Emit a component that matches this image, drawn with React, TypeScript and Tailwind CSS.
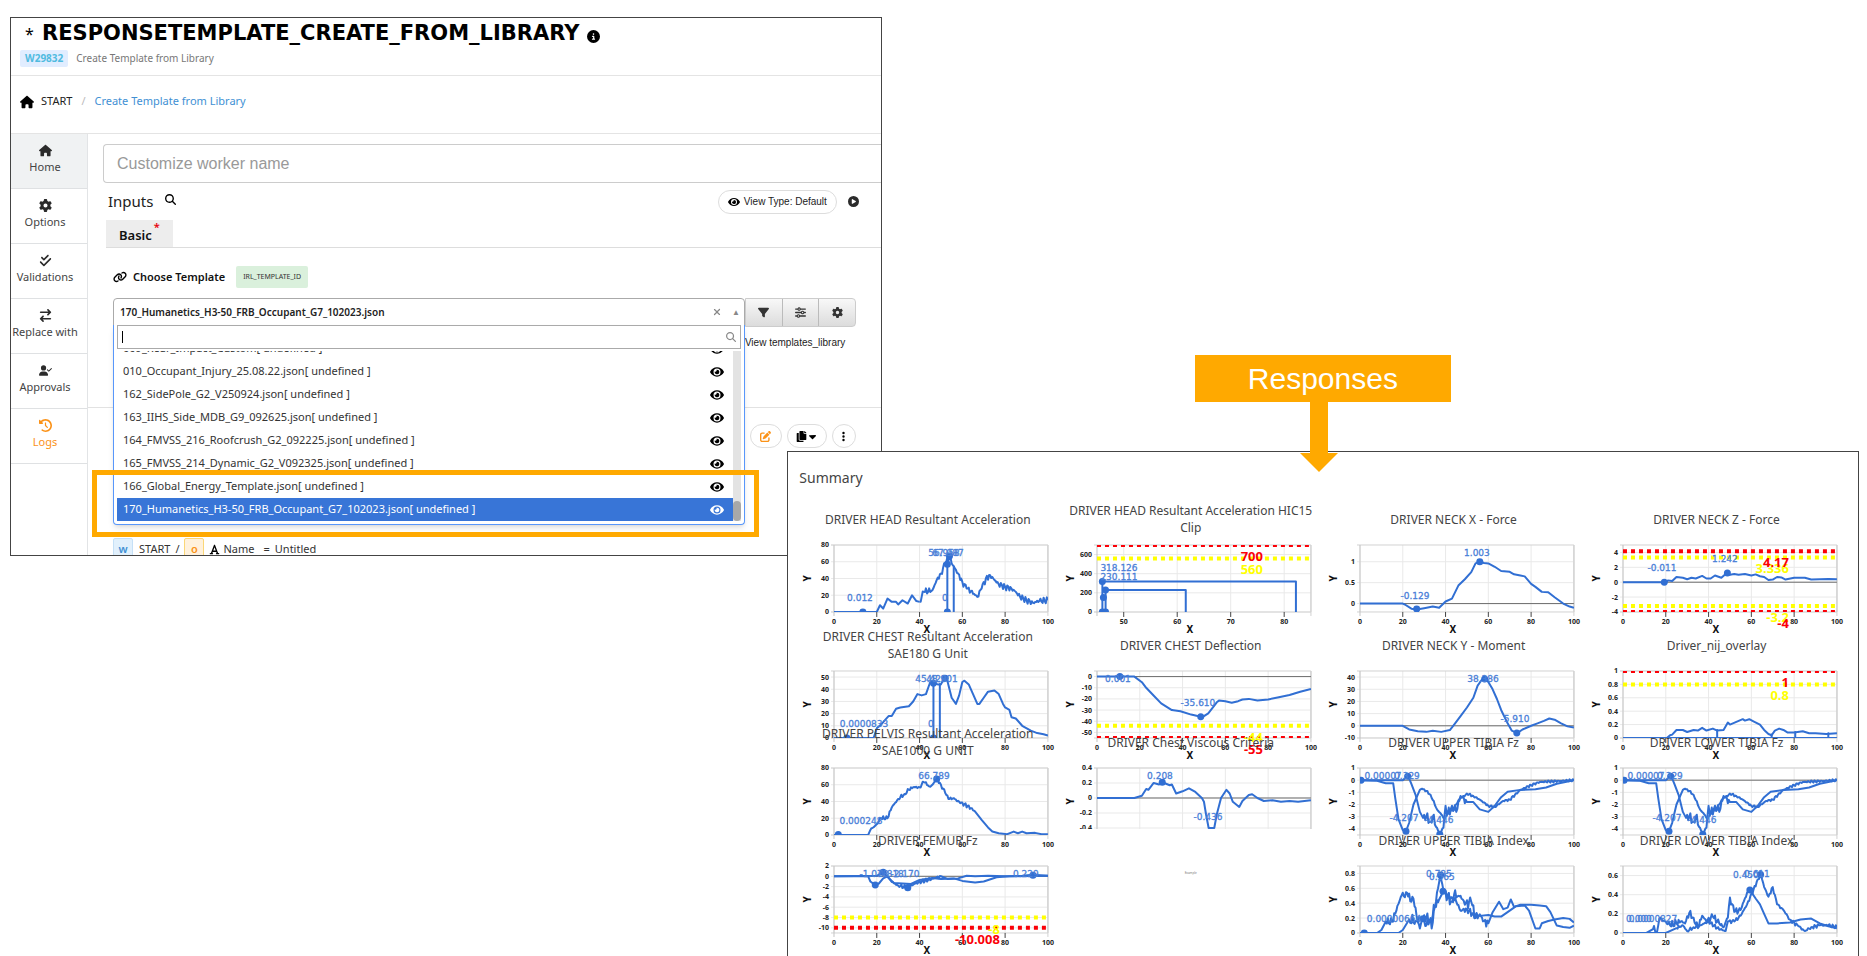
import React, { useState } from 'react';
import {
    FaArrowRightArrowLeft,
    FaCaretDown,
    FaCheckDouble,
    FaCircleInfo,
    FaCirclePlay,
    FaClockRotateLeft,
    FaEllipsisVertical,
    FaFilter,
    FaFont,
    FaGear,
    FaHouse,
    FaLink,
    FaMagnifyingGlass,
    FaPenToSquare,
    FaSliders,
    FaUserCheck,
    FaXmark,
} from 'react-icons/fa6';
import { FaCopy, FaEye } from 'react-icons/fa';

type Point = [number, number];

interface Series {
    points: Point[];
    noise?: { from: number; to: number; amp: number };
}

interface Chart {
    title: string;
    x?: [number, number];
    y: [number, number];
    xTicks?: number[];
    yTicks: number[];
    series: Series[];
    markers?: Point[];
    limits?: { value: number; color: string }[];
    // label positions are measured from the top left of the plot
    labels?: { text: string; x: number; y: number }[];
    cropped?: boolean;
}

const RED = '#fb0007';
const YELLOW = '#ffff00';
const BLUE = '#316fd3';

const tibiaForce = {
    y: [-4.5, 1] as [number, number],
    yTicks: [1, 0, -1, -2, -3, -4],
    series: [
        {
            points: [[0, 0], [8, -0.05], [12, -0.25], [15.5, -0.25], [16.5, -1.5], [18, -3.2], [20, -4.1], [21.5, -4.2], [23, -3.5], [25, -2], [28, -0.8], [29, -0.7], [31, -0.9], [33, -1.2], [36, -2.4], [38, -2.8], [39.5, -3.2], [41, -2.7], [43, -2.4], [45, -2], [47, -1.4], [49, -1.3], [50, -1.1], [53, -1.3], [56, -1.6], [60, -2.1], [63, -2.2], [67, -1.7], [70, -1.6], [75, -0.8], [80, -0.4], [84, -0.15], [90, -0.1], [100, 0]] as Point[],
            noise: { from: 28, to: 100, amp: 0.1 },
        },
        {
            points: [[0, 0], [20, 0], [22.5, 0.35], [24, -0.3], [26, -1.2], [28, -2.6], [29.5, -3.1], [31, -3], [33, -3.4], [34, -3], [36, -3.9], [37.5, -4.4], [39, -3.9], [40, -2.1], [41, -2.8], [43, -2.1], [45, -2.6], [47, -1.3], [50, -1.8], [53, -1.8], [56, -2.4], [60, -2.6], [63, -2.1], [66, -1.4], [69, -0.95], [75, -0.8], [82, -0.75], [87, -0.6], [92, -0.3], [100, 0]] as Point[],
            noise: { from: 29, to: 48, amp: 0.45 },
        },
    ],
    markers: [[0.5, 0], [22.3, 0.33], [21.5, -4.2], [37.3, -4.45]] as Point[],
    labels: [
        { text: '0.00007', x: 23, y: 8 },
        { text: '0.329', x: 47, y: 8 },
        { text: '-4.207', x: 44, y: 50 },
        { text: '-4.446', x: 79, y: 52 },
    ],
};

const charts: (Chart | null)[] = [
    {
        title: 'DRIVER HEAD Resultant Acceleration',
        y: [0, 80],
        yTicks: [0, 20, 40, 60, 80],
        series: [
            {
                points: [[0, 0], [20, 0], [21.5, 8], [23, 4], [25, 16], [27, 12], [29, 12], [30, 9], [32, 14], [34.5, 10], [36.5, 20], [38.5, 13], [40, 12]],
            },
            {
                points: [[40, 12], [42, 24], [46, 26], [48, 38], [50, 46], [52, 58], [54, 66], [55.5, 56], [58, 46], [60, 36], [62, 28], [64, 25], [67, 18], [69, 28], [71, 40], [73, 44], [74.5, 40], [77, 33], [80, 30], [83, 28], [85, 24], [87, 18], [90, 14], [93, 11], [96, 13], [100, 14]],
                noise: { from: 40, to: 100, amp: 4 },
            },
            { points: [[53, 0], [53, 57]] },
            { points: [[56, 0], [56, 55]] },
        ],
        markers: [[13.5, 0], [53, 0], [53, 57], [54, 67]],
        labels: [
            { text: '56.958', x: 110, y: 8 },
            { text: '67.987', x: 114, y: 8 },
            { text: '0.012', x: 26, y: 53 },
            { text: '0', x: 111, y: 53 },
        ],
    },
    {
        title: 'DRIVER HEAD Resultant Acceleration HIC15 Clip',
        x: [45, 85],
        y: [0, 700],
        xTicks: [50, 60, 70, 80],
        yTicks: [0, 200, 400, 600],
        series: [
            { points: [[46, 0], [46, 318], [82.2, 318], [82.2, 0]] },
            { points: [[46.6, 0], [46.6, 230], [61.6, 230], [61.6, 0]] },
        ],
        markers: [[46, 318], [46.6, 230], [46.2, 150], [46, 0], [46.6, 0]],
        limits: [{ value: 560, color: YELLOW }, { value: 700, color: RED }],
        labels: [
            { text: '318.126', x: 22, y: 23 },
            { text: '230.111', x: 22, y: 32 },
        ],
    },
    {
        title: 'DRIVER NECK X - Force',
        y: [-0.2, 1.4],
        yTicks: [0, 0.5, 1],
        series: [
            { points: [[0, 0], [20, 0], [21, -0.02], [24, -0.12], [26.5, -0.14], [30, -0.11], [34, -0.07], [37, -0.1], [40, 0.05], [43, 0.12], [46, 0.43], [49, 0.58], [52, 0.75], [54, 0.96], [56, 1], [58, 0.97], [60, 0.96], [63, 0.88], [66, 0.78], [70, 0.76], [72, 0.7], [75, 0.67], [77, 0.65], [80, 0.47], [82, 0.4], [85, 0.28], [88, 0.27], [91, 0.15], [95, 0], [98, -0.07], [100, -0.1]] },
        ],
        markers: [[26.5, -0.13], [56, 1]],
        labels: [
            { text: '1.003', x: 117, y: 8 },
            { text: '-0.129', x: 55, y: 51 },
        ],
    },
    {
        title: 'DRIVER NECK Z - Force',
        y: [-4, 5],
        yTicks: [-4, -2, 0, 2, 4],
        series: [
            { points: [[0, 0], [20, 0], [21, 0.25], [23, 0.15], [25, 0.7], [28, 0.6], [30, 0.4], [32, 0.6], [34, 0.5], [37, 0.85], [39, 0.5], [41, 0.5], [43, 0.9], [46, 0.6], [48, 1.1], [49, 1.25], [50, 1], [52, 1.1], [54, 1], [57, 1.1], [60, 0.9], [62, 1.05], [64, 0.8], [66, 0.7], [68, 0.3], [70, 0.35], [72, 0.7], [74, 0.65], [76, 0.35], [80, 0.6], [85, 0.6], [88, 0.35], [92, 0.4], [96, 0.45], [100, 0.4]] },
        ],
        markers: [[19.3, 0], [48.8, 1.25]],
        limits: [
            { value: 3.336, color: YELLOW },
            { value: -3.2, color: YELLOW },
            { value: 4.17, color: RED },
            { value: -4, color: RED },
        ],
        labels: [
            { text: '-0.011', x: 39, y: 23 },
            { text: '1.242', x: 102, y: 14 },
        ],
    },
    {
        title: 'DRIVER CHEST Resultant Acceleration SAE180 G Unit',
        y: [0, 55],
        yTicks: [0, 10, 20, 30, 40, 50],
        series: [
            { points: [[0, 0], [18.5, 0], [20, 8], [22, 11], [24, 15], [25.5, 18], [27, 18], [29, 24], [31, 25], [35, 26], [37, 30], [39, 36], [41, 35], [43, 36], [45, 46], [47, 45], [48.5, 44], [50, 44], [51.5, 49], [53, 47], [55, 33], [57, 28], [58.5, 35], [60, 46], [61, 47], [63, 44], [65, 36], [67, 28], [68, 28], [70, 33], [72, 38], [75, 39], [77, 36], [79, 28], [80, 25], [82, 23], [83, 17], [85, 16], [88, 10], [92, 6], [95, 4], [98, 3], [100, 2]] },
            { points: [[46.5, 0], [46.5, 45]] },
            { points: [[49.5, 0], [49.5, 45]] },
        ],
        markers: [[6, 0], [46.5, 0], [46.5, 45], [52, 49]],
        labels: [
            { text: '45.428', x: 97, y: 8 },
            { text: '48.901', x: 108, y: 8 },
            { text: '0.0000833', x: 30, y: 53 },
            { text: '0', x: 97, y: 53 },
        ],
    },
    {
        title: 'DRIVER CHEST Deflection',
        y: [-55, 5],
        yTicks: [0, -10, -20, -30, -40, -50],
        series: [
            { points: [[0, 0], [17.5, 0], [21, -5], [23, -10], [27, -18], [30, -24], [35, -30], [39, -31], [44, -34], [48.5, -36], [50, -35.5], [52, -33], [54, -28], [56, -23], [57, -21.5], [60, -22], [63, -23.5], [66, -22], [68, -20.5], [71, -20], [75, -21.5], [80, -20.5], [85, -18.5], [90, -16.5], [95, -13.5], [100, -11]] },
        ],
        markers: [[10.7, 0], [48.5, -36]],
        limits: [{ value: -44, color: YELLOW }, { value: -55, color: RED }],
        labels: [
            { text: '0.001', x: 21, y: 8 },
            { text: '-35.610', x: 101, y: 32 },
        ],
    },
    {
        title: 'DRIVER NECK Y - Moment',
        y: [-10, 45],
        yTicks: [-10, 0, 10, 20, 30, 40],
        series: [
            { points: [[0, 0], [20, 0], [23, -3], [27, -4.5], [31, -5], [34, -4], [38, -5], [42, -3.5], [44, 1], [47, 8], [50, 15], [53, 23], [55, 33], [57, 38], [58.5, 38.5], [60, 36], [62, 30], [64, 22], [66, 13], [69, 2], [71, -4], [73.5, -6], [76, -3], [80, 0], [83, 2], [86, 4], [88.5, 6], [91, 5], [94, 2], [97, -0.5], [100, -1.5]] },
        ],
        markers: [[58.3, 38.4], [73.3, -6]],
        labels: [
            { text: '38.386', x: 123, y: 8 },
            { text: '-5.910', x: 155, y: 48 },
        ],
    },
    {
        title: 'Driver_nij_overlay',
        y: [0, 1],
        yTicks: [0, 0.2, 0.4, 0.6, 0.8, 1],
        series: [
            { points: [[0, 0], [20.5, 0], [22, 0.04], [23, 0.05], [25, 0.12], [28, 0.12], [30, 0.09], [33, 0.12], [35, 0.11], [37, 0.15], [39, 0.11], [42, 0.14], [44, 0.11], [47, 0.12], [49, 0.23], [50, 0.2], [53, 0.24], [56, 0.28], [57, 0.26], [59, 0.28], [61, 0.25], [64, 0.2], [66, 0.12], [68, 0.06], [69.5, 0.04], [71, 0.11], [73, 0.14], [75, 0.12], [77, 0.08], [80, 0.08], [84, 0.1], [87, 0.07], [90, 0.07], [95, 0.06], [100, 0.07]] },
            { points: [[0, 0], [44, 0], [44, 0.12], [44, 0], [69.5, 0], [69.5, 0.05], [69.5, 0], [80.5, 0], [80.5, 0.09], [80.5, 0], [96, 0], [96, 0.07], [96, 0], [100, 0]] },
        ],
        limits: [{ value: 0.8, color: YELLOW }, { value: 1, color: RED }],
    },
    {
        title: 'DRIVER PELVIS Resultant Acceleration SAE1000 G UNIT',
        y: [0, 80],
        yTicks: [0, 20, 40, 60, 80],
        series: [
            {
                points: [[0, 0], [16, 0], [17, 6], [20, 13], [22, 20], [25, 20], [27, 33], [30, 43], [33, 49], [35, 54], [37, 57], [40, 57], [42, 63], [43, 63], [44.5, 58], [46, 60], [48, 67], [50, 60], [52, 50], [53.5, 43], [56, 44], [59, 38], [61, 37], [64, 32], [66, 28], [69, 18], [72, 9], [74, 4], [77, 2], [81, 1], [84, 4], [86, 2], [88, 4], [90, 2], [94, 2.5], [97, 1], [100, 1]],
                noise: { from: 17, to: 66, amp: 2.5 },
            },
        ],
        markers: [[2, 0.6], [48, 67]],
        labels: [
            { text: '66.789', x: 100, y: 8 },
            { text: '0.000248', x: 27, y: 53 },
        ],
    },
    {
        title: 'DRIVER Chest Viscous Criteria',
        y: [-0.493, 0.4],
        yTicks: [-0.4, -0.2, 0, 0.2, 0.4],
        series: [
            { points: [[0, 0], [17.5, 0], [21, 0.03], [23, 0.12], [24, 0.11], [26.5, 0.2], [29, 0.18], [30.5, 0.21], [34, 0.17], [35, 0.18], [37, 0.06], [40, 0.09], [43, 0.13], [46, 0.08], [49, 0], [50, -0.05], [51, -0.22], [52.2, -0.4], [54.8, -0.4], [56, -0.22], [58, 0], [60.5, 0.11], [62, 0.06], [63.5, -0.05], [66.5, -0.12], [68, -0.04], [71, 0.04], [72.5, 0.05], [75, 0], [78, -0.04], [82, -0.03], [86, -0.05], [90, -0.04], [94, -0.05], [100, -0.03]] },
        ],
        markers: [[30.5, 0.21]],
        labels: [
            { text: '0.208', x: 63, y: 8 },
            { text: '-0.436', x: 111, y: 49 },
        ],
        cropped: true,
    },
    { title: 'DRIVER UPPER TIBIA Fz', ...tibiaForce },
    { title: 'DRIVER LOWER TIBIA Fz', ...tibiaForce },
    {
        title: 'DRIVER FEMUR Fz',
        y: [-11, 2],
        yTicks: [2, 0, -2, -4, -6, -8, -10],
        series: [
            {
                points: [[0, 0], [16, 0], [17, -1], [19.3, -1.7], [21, -1.4], [23, -0.4], [25, 0], [27, -1.1], [30, -1.8], [34, -2.2], [38, -1.4], [41, -1], [44, -0.7], [50, 0], [53, -0.5], [58, -0.4], [62, 0.1], [66, 0], [72, 0.1], [80, 0], [100, 0.1]],
                noise: { from: 27, to: 47, amp: 0.4 },
            },
            { points: [[0, 0], [20, 0.1], [23, 0.8], [25, -0.1], [28, -1.3], [32, -1.4], [36, -1.5], [40, -0.7], [46, -0.3], [50, -0.5], [56, -0.4], [60, -0.9], [66, -1.2], [70, -1], [76, -0.2], [82, 0], [88, 0.1], [93, 0.3], [100, 0.1]] },
        ],
        markers: [[19.3, -1.7], [23, 0.8], [34.5, -2.2], [93, 0.2]],
        limits: [{ value: -8, color: YELLOW }, { value: -10.008, color: RED }],
        labels: [
            { text: '-1.078', x: 40, y: 8 },
            { text: '0.818', x: 57, y: 8 },
            { text: '-2.170', x: 71, y: 8 },
            { text: '0.229', x: 192, y: 8 },
        ],
    },
    null,
    {
        title: 'DRIVER UPPER TIBIA Index',
        y: [0, 0.9],
        yTicks: [0, 0.2, 0.4, 0.6, 0.8],
        series: [
            {
                points: [[0, 0], [8, 0], [10, 0.04], [12, 0.15], [15, 0.15], [17, 0.3], [19, 0.48], [20, 0.54], [21, 0.48], [22, 0.54], [24, 0.42], [25, 0.46], [27, 0.15], [28, 0.06], [29, 0.18], [31, 0.1], [33, 0.2], [33.5, 0.06], [35, 0.35], [36.5, 0.6], [37.5, 0.78], [39, 0.57], [41, 0.5], [43, 0.48], [45, 0.42], [47, 0.3], [50, 0.32], [53, 0.25], [56, 0.23], [60, 0.24], [63, 0.22], [66, 0.22], [70, 0.3], [73, 0.36], [77, 0.37], [79, 0.3], [82, 0.06], [84, 0.06], [85, 0.13], [88, 0.16], [91, 0.18], [95, 0.2], [98, 0.19], [100, 0.14]],
                noise: { from: 12, to: 56, amp: 0.05 },
            },
            {
                points: [[0, 0], [18, 0], [20, 0.04], [23, 0.18], [26, 0.16], [28, 0.2], [31, 0.2], [33, 0.18], [35, 0.35], [37, 0.45], [39, 0.55], [41, 0.48], [43, 0.42], [44, 0.52], [46, 0.5], [47, 0.5], [49, 0.38], [52, 0.42], [54, 0.2], [56, 0.25], [58, 0.16], [60, 0.13], [62, 0.28], [65, 0.42], [67, 0.32], [69, 0.34], [70.5, 0.45], [72, 0.35], [75, 0.38], [80, 0.38], [84, 0.37], [87, 0.36], [89, 0.28], [92, 0.1], [95, 0.08], [98, 0.07], [100, 0.1]],
                noise: { from: 22, to: 60, amp: 0.08 },
            },
        ],
        markers: [[2, 0], [29.5, 0.19], [37.7, 0.78], [38.8, 0.56]],
        labels: [
            { text: '0.785', x: 79, y: 8 },
            { text: '0.565', x: 82, y: 11 },
            { text: '0.00000664', x: 34, y: 53 },
        ],
    },
    {
        title: 'DRIVER LOWER TIBIA Index',
        y: [0, 0.7],
        yTicks: [0, 0.2, 0.4, 0.6],
        series: [
            {
                points: [[0, 0], [11, 0], [14, 0.04], [16, 0.02], [17, 0.15], [20, 0.12], [22, 0.08], [25, 0.1], [27, 0.12], [29, 0.1], [31, 0.21], [33, 0.16], [35, 0.05], [37, 0.18], [39, 0.12], [42, 0.17], [45, 0.1], [47, 0.06], [49, 0.16], [50, 0.37], [52, 0.22], [55, 0.24], [58, 0.42], [59.3, 0.45], [62, 0.36], [64, 0.3], [66, 0.2], [68, 0.1], [72, 0.1], [78, 0.11], [83, 0.14], [88, 0.15], [92, 0.1], [96, 0.07], [100, 0.05]],
                noise: { from: 14, to: 58, amp: 0.04 },
            },
            {
                points: [[0, 0], [20, 0], [25, 0.05], [28, 0.08], [30, 0.02], [33, 0.06], [36, 0.08], [40, 0.12], [44, 0.05], [48, 0.02], [49, 0.12], [52, 0.12], [55, 0.18], [58, 0.3], [61, 0.45], [63, 0.56], [64.5, 0.61], [66, 0.48], [68, 0.38], [70, 0.48], [72, 0.3], [75, 0.24], [78, 0.14], [82, 0.07], [85, 0.02], [88, 0.06], [92, 0.08], [96, 0.08], [100, 0.06]],
                noise: { from: 22, to: 100, amp: 0.02 },
            },
        ],
        markers: [[59.3, 0.45], [64.3, 0.61]],
        labels: [
            { text: '0.450', x: 123, y: 9 },
            { text: '0.611', x: 134, y: 8 },
            { text: '0.000', x: 16, y: 53 },
            { text: '0.0000827', x: 30, y: 53 },
        ],
    },
];

const PLOT = { left: 38, top: 9, width: 214, height: 67 };

// adds a repeatable ripple between two x values
const addNoise = (series: Series): Point[] => {
    const { points, noise } = series;
    if (!noise) return points;

    const result: Point[] = [];
    points.forEach(([x, y], index) => {
        result.push([x, y]);
        const next = points[index + 1];
        if (!next || x < noise.from || x >= noise.to) return;

        const steps = Math.max(1, Math.round((next[0] - x) / 0.5));
        for (let i = 1; i < steps; i++) {
            const t = i / steps;
            const px = x + (next[0] - x) * t;
            const ripple = Math.sin(px * 12.9) * Math.cos(px * 4.1);
            result.push([px, y + (next[1] - y) * t + ripple * noise.amp]);
        }
    });
    return result;
};

function ResponseChart({ chart }: { chart: Chart }) {
    const [xMin, xMax] = chart.x ?? [0, 100];
    const [yMin, yMax] = chart.y;
    const xTicks = chart.xTicks ?? [0, 20, 40, 60, 80, 100];
    const right = PLOT.left + PLOT.width;
    const bottom = PLOT.top + PLOT.height;

    const toX = (value: number) => ((value - xMin) / (xMax - xMin)) * PLOT.width;
    const toY = (value: number) => ((yMax - value) / (yMax - yMin)) * PLOT.height;

    return (
        <svg
            viewBox={chart.cropped ? '0 0 263 70' : '0 0 263 100'}
            className={chart.cropped ? 'w-full shrink-0 overflow-hidden' : 'w-full shrink-0 overflow-visible'}
            role="img"
            aria-label={chart.title}
        >
            {/* grid */}
            {xTicks.map(tick => (
                <line key={tick} x1={PLOT.left + toX(tick)} x2={PLOT.left + toX(tick)} y1={PLOT.top} y2={bottom} stroke="#e9e9e9" />
            ))}
            {chart.yTicks.map(tick => (
                <line key={tick} x1={PLOT.left - 3} x2={right} y1={PLOT.top + toY(tick)} y2={PLOT.top + toY(tick)} stroke="#e9e9e9" />
            ))}
            <path d={`M${PLOT.left - 3} ${PLOT.top}H${right}V${bottom}H${PLOT.left - 3}`} fill="none" stroke="#d2d2d2" />
            <line x1={PLOT.left} x2={PLOT.left} y1={PLOT.top} y2={bottom + 4} stroke="#c4c4c4" />
            <line x1={right} x2={right} y1={PLOT.top} y2={bottom + 4} stroke="#d2d2d2" />
            {yMin < 0 && (
                <line x1={PLOT.left} x2={right} y1={PLOT.top + toY(0)} y2={PLOT.top + toY(0)} stroke="#6b6b6b" />
            )}

            {/* axis labels */}
            <g className="font-['Noto_Sans'] text-[7px] font-bold" fill="#222">
                {chart.yTicks.map(tick => (
                    <text key={tick} x={PLOT.left - 5} y={PLOT.top + toY(tick)} textAnchor="end" dominantBaseline="central">
                        {tick}
                    </text>
                ))}
                {!chart.cropped && xTicks.map(tick => (
                    <g key={tick}>
                        {tick !== xMin && tick !== xMax && (
                            <line x1={PLOT.left + toX(tick)} x2={PLOT.left + toX(tick)} y1={bottom} y2={bottom + 5} stroke="#444" />
                        )}
                        <text x={PLOT.left + toX(tick)} y={bottom + 10} textAnchor="middle" dominantBaseline="central">
                            {tick}
                        </text>
                    </g>
                ))}
            </g>
            <g className="font-['Noto_Sans'] text-[10px] font-bold" fill="#111">
                <text transform={`translate(11 ${PLOT.top + PLOT.height / 2}) rotate(-90)`} textAnchor="middle" dominantBaseline="central">Y</text>
                {!chart.cropped && (
                    <text x="131" y={bottom + 17} textAnchor="middle" dominantBaseline="central">X</text>
                )}
            </g>

            {/* data, clipped to the plot */}
            <svg x={PLOT.left} y={PLOT.top} width={PLOT.width} height={PLOT.height}>
                {chart.limits?.map(limit => (
                    <line
                        key={limit.value}
                        x1="0"
                        x2={PLOT.width}
                        y1={toY(limit.value)}
                        y2={toY(limit.value)}
                        stroke={limit.color}
                        strokeWidth="4"
                        strokeDasharray="4 4"
                    />
                ))}
                {chart.series.map((series, index) => (
                    <polyline
                        key={index}
                        points={addNoise(series).map(([x, y]) => `${toX(x).toFixed(1)},${toY(y).toFixed(1)}`).join(' ')}
                        fill="none"
                        stroke={BLUE}
                        strokeWidth="2"
                        strokeLinejoin="round"
                    />
                ))}
                {chart.markers?.map(([x, y], index) => (
                    <circle key={index} cx={toX(x)} cy={toY(y)} r="3.5" fill={BLUE} />
                ))}
            </svg>

            <g className="font-['Noto_Sans'] text-[13px] font-bold">
                {chart.limits?.map(limit => (
                    <text key={limit.value} x={PLOT.left + 166} y={PLOT.top + toY(limit.value) + 11} fill={limit.color} textAnchor="end" dominantBaseline="central">
                        {limit.value}
                    </text>
                ))}
            </g>
            <g className="font-['DejaVu_Sans'] text-[9px]" fill="#4a80d8" stroke="#4a80d8" strokeWidth="0.3">
                {chart.labels?.map(label => (
                    <text key={label.text} x={PLOT.left + label.x} y={PLOT.top + label.y} textAnchor="middle" dominantBaseline="central">
                        {label.text}
                    </text>
                ))}
            </g>
        </svg>
    );
}

const menuItems = [
    { label: 'Home', icon: FaHouse },
    { label: 'Options', icon: FaGear },
    { label: 'Validations', icon: FaCheckDouble },
    { label: 'Replace with', icon: FaArrowRightArrowLeft },
    { label: 'Approvals', icon: FaUserCheck },
    { label: 'Logs', icon: FaClockRotateLeft },
];

const templates = [
    '009_Rear_Impact_Custom',
    '010_Occupant_Injury_25.08.22.json',
    '162_SidePole_G2_V250924.json',
    '163_IIHS_Side_MDB_G9_092625.json',
    '164_FMVSS_216_Roofcrush_G2_092225.json',
    '165_FMVSS_214_Dynamic_G2_V092325.json',
    '166_Global_Energy_Template.json',
    '170_Humanetics_H3-50_FRB_Occupant_G7_102023.json',
];

function SideMenu() {
    return (
        <nav className="w-[77px] shrink-0 border-r border-[#e2e4e6]">
            {menuItems.map(({ label, icon: Icon }) => (
                <a
                    key={label}
                    href="#"
                    className={`flex h-[55px] flex-col items-center justify-center gap-[2px] border-b border-[#dfe1e3] pr-2 pb-1 text-[11px] leading-4 whitespace-nowrap ${label === 'Home' ? 'bg-[#f0f2f3]' : ''} ${label === 'Logs' ? 'text-[#fb9217]' : 'text-[#444]'}`}
                >
                    <Icon className={label === 'Logs' ? 'size-[13px]' : 'size-[13px] text-[#2b2b2b]'} />
                    {label}
                </a>
            ))}
        </nav>
    );
}

function TemplateSelect() {
    const [selected, setSelected] = useState(templates[templates.length - 1]);
    const [search, setSearch] = useState('');

    return (
        <div className="relative min-w-0 flex-1">
            <button
                type="button"
                aria-expanded="true"
                className="flex h-7 w-full items-center rounded-t border border-[#aaa] pr-1 pl-[6px] text-[10px] font-semibold text-[#222]"
            >
                <span className="flex-1 text-left">{selected}</span>
                <FaXmark className="mr-[10px] size-[10px] text-[#888]" />
                <span className="text-[8px] text-[#888]">▲</span>
            </button>

            {/* Open list */}
            <div className="absolute top-[27px] left-0 h-[200px] w-full rounded-b border border-t-0 border-[#5897fb] bg-white px-[3px] shadow-md">
                <div className="flex h-6 items-center border border-[#aaa] pr-1">
                    <input
                        aria-label="Search templates"
                        value={search}
                        onChange={(e) => setSearch(e.target.value)}
                        className="h-full flex-1 px-1 text-[11px] outline-none"
                    />
                    <FaMagnifyingGlass className="size-[10px] text-[#888]" />
                </div>
                <span className="absolute top-[6px] left-2 h-3 border-l border-black" />
                <div className="mt-[2px] flex h-[170px]">
                    <ul role="listbox" className="flex flex-1 flex-col justify-end overflow-hidden text-[11px] text-[#333]">
                        {templates.map(name => (
                            <li
                                key={name}
                                role="option"
                                aria-selected={name === selected}
                                onClick={() => setSelected(name)}
                                className={`flex h-[23px] shrink-0 items-center justify-between pr-[9px] pl-[6px] ${name === selected ? 'bg-[#3875d7] text-white' : ''}`}
                            >
                                {name}[ undefined ]
                                <FaEye className={name === selected ? 'size-[14px] text-white' : 'size-[14px] text-black'} />
                            </li>
                        ))}
                    </ul>
                    <div className="flex w-2 flex-col justify-end bg-[#e3e3e3]">
                        <div className="h-5 rounded-full bg-[#a8a8a8]" />
                    </div>
                </div>
            </div>

            {/* Highlight around the last two templates */}
            <div className="pointer-events-none absolute top-[172px] -right-[14px] -left-[21px] h-[67px] border-[5px] border-[#ffa900]" />
        </div>
    );
}

function WorkerWindow() {
    return (
        <section className="ml-[10px] h-[539px] w-[46.7%] overflow-hidden border border-[#444] bg-white font-['Noto_Sans',sans-serif]">
            <header className="border-b border-[#e4e4e4] pt-[2px] pb-2">
                <div className="flex h-7 items-center pl-[14px]">
                    <span className="w-[17px] text-[16px]">*</span>
                    <h1 className="font-['DejaVu_Sans',sans-serif] text-[21px] font-bold whitespace-nowrap text-black">RESPONSETEMPLATE_CREATE_FROM_LIBRARY</h1>
                    <FaCircleInfo className="mt-1 ml-2 size-[13px] shrink-0" />
                </div>
                <div className="mt-[2px] flex h-[17px] items-center gap-2 pl-[9px]">
                    <span className="rounded-xs bg-[#e1edff] px-[5px] text-[10px] leading-[17px] font-bold text-[#50bbdf]">W29832</span>
                    <span className="text-[10px] text-[#777]">Create Template from Library</span>
                </div>
            </header>

            <nav className="flex h-[58px] items-center border-b border-[#e4e4e4] pb-[6px] pl-[9px] text-[11px] text-[#222]">
                <FaHouse className="mr-[7px] size-[14px] text-black" />
                <a href="#">START</a>
                <span className="mx-[9px] text-[#bbb]">/</span>
                <a href="#" className="text-[#4190d4]">Create Template from Library</a>
            </nav>

            <div className="flex">
                <SideMenu />
                <main className="min-w-0 flex-1">
                    <div className="pt-[10px] pl-[15px]">
                        <input
                            aria-label="Worker name"
                            placeholder="Customize worker name"
                            className="h-[39px] w-full rounded-l border border-r-0 border-[#ccc] px-[13px] font-['Liberation_Sans',sans-serif] text-[16px] placeholder-[#999]"
                        />
                        <div className="flex h-[37px] items-center pr-[22px] pl-[5px]">
                            <h2 className="text-[15px] text-[#222]">Inputs</h2>
                            <FaMagnifyingGlass className="mb-1 ml-3 size-[11px] text-black" />
                            <button className="mr-[11px] ml-auto flex h-6 items-center gap-1 rounded-full border border-[#ddd] px-[9px] font-['Liberation_Sans',sans-serif] text-[10px] text-[#222]">
                                <FaEye className="size-[12px] text-black" />
                                View Type: Default
                            </button>
                            <button aria-label="Run">
                                <FaCirclePlay className="size-[11px] text-[#2b2b2b]" />
                            </button>
                        </div>
                        <div className="ml-[3px] flex border-b border-[#ddd]">
                            <button className="flex h-[27px] items-center gap-[2px] bg-[#ededed] px-[13px] pt-1 text-[13px] font-semibold text-[#111]">
                                Basic
                                <span className="mb-4 text-[11px] text-red-600">*</span>
                            </button>
                        </div>
                        <div className="mt-[18px] flex h-[22px] items-center pl-[10px]">
                            <FaLink className="mr-[6px] size-[14px] text-black" />
                            <span className="mr-[11px] text-[11px] font-semibold text-[#111]">Choose Template</span>
                            <span className="rounded-xs bg-[#daf0dc] px-[7px] text-[7px] leading-[22px] text-[#333]">IRL_TEMPLATE_ID</span>
                        </div>
                        <div className="mt-[10px] flex h-[109px] pr-[25px] pl-[10px]">
                            <TemplateSelect />
                            <div className="w-[111px]">
                                <div className="flex h-[29px] divide-x divide-[#bbb] rounded-r border border-[#ccc] bg-linear-to-b from-[#f8f8f8] to-[#dcdcdc] text-[#333]">
                                    <button aria-label="Filter" className="flex flex-1 items-center justify-center"><FaFilter className="size-[11px]" /></button>
                                    <button aria-label="Adjust" className="flex flex-1 items-center justify-center"><FaSliders className="size-[11px]" /></button>
                                    <button aria-label="Settings" className="flex flex-1 items-center justify-center"><FaGear className="size-[11px]" /></button>
                                </div>
                                <a href="#" className="mt-2 block font-['Liberation_Sans',sans-serif] text-[10px] whitespace-nowrap text-[#222]">View templates_library</a>
                            </div>
                        </div>
                    </div>

                    <div className="flex h-[41px] items-end justify-end gap-[5px] border-t border-[#e2e2e2] pr-[25px]">
                        <button aria-label="Edit" className="flex h-6 w-8 items-center justify-center rounded-full border border-[#ddd] text-[#fb9217]">
                            <FaPenToSquare className="size-[11px]" />
                        </button>
                        <button aria-label="Copy" className="flex h-6 w-10 items-center justify-center rounded-full border border-[#ddd] text-black">
                            <FaCopy className="size-[11px]" />
                            <FaCaretDown className="size-[11px]" />
                        </button>
                        <button aria-label="More" className="flex size-6 items-center justify-center rounded-full border border-[#ddd] text-black">
                            <FaEllipsisVertical className="size-[11px]" />
                        </button>
                    </div>

                    <div className="mt-[91px] flex h-5 items-center pl-[25px] text-[11px] text-[#333]">
                        <span className="mr-[6px] w-5 rounded-xs border border-[#c5e0f7] bg-[#e1f0fc] text-center leading-5 font-semibold text-[#4190d4]">w</span>
                        START
                        <span className="mx-[5px]">/</span>
                        <span className="mr-[5px] w-5 rounded-xs border border-[#fbd777] bg-[#fff1dc] text-center leading-5 font-semibold text-[#fb9217]">o</span>
                        <FaFont className="mr-[3px] size-[11px] text-black" />
                        Name
                        <span className="mr-[5px] ml-[9px]">=</span>
                        Untitled
                    </div>
                </main>
            </div>
        </section>
    );
}

function App() {
    return (
        <div className="relative h-screen overflow-hidden bg-white pt-[17px]">
            <WorkerWindow />

            {/* Response charts */}
            <section className="relative -mt-[105px] mr-2 ml-auto h-[560px] w-[57.4%] border border-[#444] bg-white pr-[10px] pl-2 font-['Noto_Sans',sans-serif]">
                <h2 className="mt-4 ml-[3px] text-[14px] leading-5 text-[#444]">Summary</h2>
                <div className="mt-[14px] grid grid-cols-4 grid-rows-[126px_97px_98px_132px]">
                    {charts.map((chart, index) => chart ? (
                        <figure key={chart.title} className="flex min-w-0 flex-col">
                            <figcaption className="flex h-[34px] shrink-0 items-center justify-center px-2 text-center text-[12px] leading-[17px] text-[#444]">
                                {chart.title}
                            </figcaption>
                            <ResponseChart chart={chart} />
                        </figure>
                    ) : (
                        <p key={index} className="mt-[48px] text-center text-[3px] text-[#777]">Example</p>
                    ))}
                </div>
            </section>

            {/* Callout pointing at the charts */}
            <div className="absolute top-[355px] left-[64%] flex w-64 flex-col items-center">
                <p className="w-full bg-[#ffa900] text-center font-['Liberation_Sans',sans-serif] text-[30px] leading-[47px] text-white">Responses</p>
                <svg viewBox="0 0 38 70" className="mr-2 w-[38px]" aria-hidden="true">
                    <path d="M10 0H28V51H38L19 70L0 51H10Z" fill="#ffa900" />
                </svg>
            </div>
        </div>
    );
}

export default App;
